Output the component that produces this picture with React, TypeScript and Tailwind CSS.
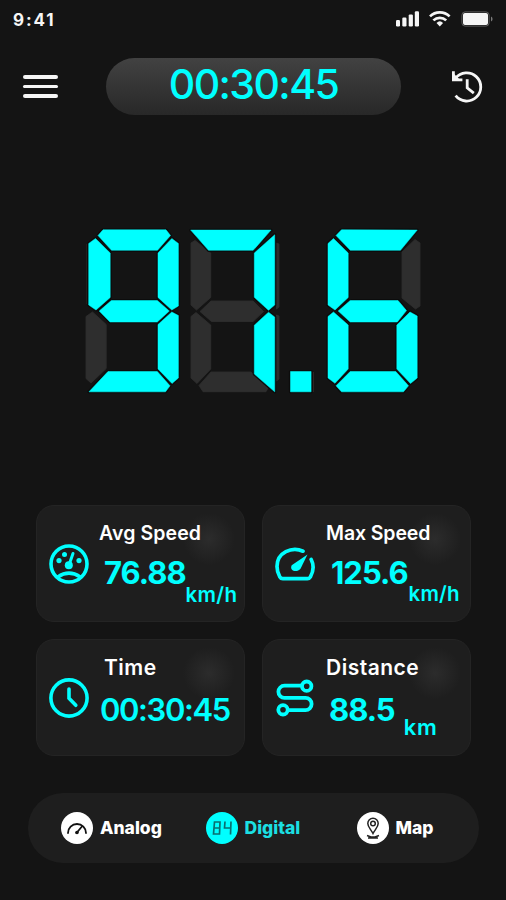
import type { ReactNode } from "react";
import clsx from "clsx";

// seven segment display, lit segments first and ghost segments below them
const litSegments = [
  // 9
  "98,235.5 103,229.8 166,229.8 170.5,235.5 157.5,250.3 111.5,250.3",
  "88.7,243.5 95.5,238.5 110.2,253 110.2,297.5 96,310 88.7,305",
  "171.8,238.5 178.4,243.5 178.4,306 171.8,310 158,297.5 158,253",
  "99.2,311 111.3,300.5 157.3,300.5 169.3,311 157.3,322 110,322",
  "171.8,312 178.4,315.5 178.4,378 172,383.5 158,369 158,324.5",
  "89,391.8 108,371.5 157.3,371.5 170,385.8 165.5,391.8",
  // 7
  "190.7,230.1 271,230.1 253.2,250.3 208.5,250.3",
  "274.7,234.8 274.7,305 268.5,310.3 254.3,297.3 254.3,253",
  "268.5,312.2 274.7,317 274.7,391.8 254.3,374 254.3,325.2",
  // dot
  "290.5,371.5 311.1,371.5 311.1,391.8 290.5,391.8",
  // 6
  "336,235.5 341.5,229.8 417.2,230.1 400.5,250.3 350.3,250.3",
  "328,243.5 333.5,238.5 348.2,253 348.2,297.5 335,310 328,305",
  "338.2,311 350.2,300.5 398,300.5 406.5,310.6 397.3,322 350.2,322",
  "333.5,312 348.2,325 348.2,369 335,383.3 328,378 328,316.5",
  "410,312 417.2,316 417.2,378 410.5,383.5 396.8,369 396.8,325",
  "336,385.8 350.2,371.5 395.800,371.5 408.5,385.8 403.5,391.8 341.5,391.8",
];

const ghostSegments = [
  "86,316.5 92.5,312 106.2,324.5 106.2,368.5 91,383 86,378.5",
  "191,243 195,240.5 210.7,253 210.7,297.5 196.5,310 191,305",
  "200,311.5 211,301 253,301 263.5,311.5 253,321.5 211.5,321.5",
  "191,316.5 196,312.5 210.7,325 210.7,369 197,383.5 191,378",
  "199,385.5 211,372 251,372 268,388 266,391.7 203,391.7",
  "276.5,243 279,244 279,307 276.5,309",
  "276.5,315 279,316 279,379 276.5,381",
  "420,243 420,306 415.5,309 402,298 402,252 415,239.5",
];

function SpeedDisplay() {
  return (
    <svg viewBox="80 220 350 180" className="h-[180px] w-[350px]" strokeLinejoin="round">
      <g fill="#2e2e2e" stroke="#2e2e2e" strokeWidth="0.8">
        {ghostSegments.map((points) => (
          <polygon key={points} points={points} />
        ))}
      </g>
      <path d="M313.3 372v20M87 244v60" stroke="#352a28" fill="none" />
      {/* dark rim keeps neighbouring segments apart */}
      <g fill="none" stroke="#0c0c0c" strokeWidth="3.2">
        {litSegments.map((points) => (
          <polygon key={points} points={points} />
        ))}
      </g>
      <g fill="#00ffff" stroke="#00ffff" strokeWidth="0.5">
        {litSegments.map((points) => (
          <polygon key={points} points={points} />
        ))}
      </g>
    </svg>
  );
}

function StatusBar() {
  return (
    <div className="flex h-10 items-start justify-between pt-[9px] pr-[12px] pl-[13px] text-[#f6f6f6]">
      <span className="mt-[3px] text-[17px] leading-none font-bold tracking-[1.9px]">9:41</span>
      <svg viewBox="0 0 100 20" className="h-5 w-[100px]">
        <g fill="currentColor">
          <rect x="2" y="11" width="4" height="6.5" rx="1.2" />
          <rect x="8.3" y="8.6" width="4.2" height="8.9" rx="1.2" />
          <rect x="14.7" y="5.4" width="4.2" height="12.1" rx="1.2" />
          <rect x="20.8" y="2.2" width="4.2" height="15.3" rx="1.2" />
          <path d="M45.8 17.4l-3.3-3.5a4.8 4.8 0 0 1 6.6 0z" />
          <rect x="69" y="4" width="25" height="12" rx="2" />
        </g>
        <g fill="none" stroke="currentColor" strokeWidth="2.7">
          <path d="M36 7.4a14 14 0 0 1 19.6 0" />
          <path d="M39.4 11.4a9.2 9.2 0 0 1 12.8 0" />
        </g>
        <rect x="67.9" y="2.9" width="27.2" height="14.2" rx="3.2" fill="none" stroke="#5c5c5c" />
        <path d="M97 7.6v4.8a2.6 2.6 0 0 0 0-4.8z" fill="#7a7a7a" />
      </svg>
    </div>
  );
}

function HistoryIcon() {
  return (
    <svg viewBox="0 0 34 36" className="h-9 w-[34px]" fill="none" stroke="#f6f6f6" strokeWidth="2.8">
      <path d="M4.6 9.2A14.100 14.100 0 1 1 4.600 26.700" />
      <path d="M2.400 2.200v8.600h9" />
      <path d="M2.600 4.500v6.300h6.300z" fill="#f6f6f6" stroke="none" />
      <path d="M16.200 10.300v8.600l6.600 5.200" />
    </svg>
  );
}

function AvgIcon() {
  return (
    <svg viewBox="0 0 40 40" className="size-10 text-[#00ffff]" fill="none" stroke="currentColor">
      <circle cx="20" cy="20" r="18" strokeWidth="3.6" />
      <path d="M8.8 33q11.200-7.600 22.400 0" strokeWidth="3.6" />
      <path d="M20 21l4-11.5" strokeWidth="3" strokeLinecap="round" />
      <g fill="currentColor" stroke="none">
        <circle cx="19.8" cy="21.2" r="4" />
        <circle cx="10" cy="16.6" r="2.6" />
        <circle cx="15.5" cy="10.4" r="2.5" />
        <circle cx="30" cy="16.6" r="2.6" />
      </g>
    </svg>
  );
}

function MaxIcon() {
  return (
    <svg viewBox="0 0 40 36" className="h-9 w-10 text-[#00ffff]" fill="none" stroke="currentColor" strokeWidth="3.7">
      <path d="M28 5.200C17 .2 2 6.400 2 20.500c0 4 1.200 7.500 2.800 10.300q.9 1.800 3 1.800h24.600q2 0 3-1.800c3-5.400 3.600-11.800.8-17.300" strokeLinecap="round" />
      <path d="M32.500 8.500L25.500 22.700c-3.600 4.600-11.500 2.200-8.800-3.400z" fill="currentColor" stroke="none" />
    </svg>
  );
}

function TimeIcon() {
  return (
    <svg viewBox="0 0 40 40" className="size-10 text-[#00ffff]" fill="none" stroke="currentColor" strokeWidth="3.6">
      <circle cx="20" cy="20" r="18.1" />
      <path d="M20 11v9.300l6.800 7" strokeLinecap="round" />
    </svg>
  );
}

function DistanceIcon() {
  return (
    <svg viewBox="0 0 38 38" className="size-[38px] text-[#00ffff]" fill="none" stroke="currentColor" strokeWidth="3.800">
      <circle cx="30.700" cy="7.200" r="4.700" />
      <circle cx="7" cy="30.800" r="4.700" />
      <path d="M26 6.700H8.500a6.100 6.100 0 0 0 0 12.200h21a6.100 6.100 0 0 1 0 12.200H12" />
    </svg>
  );
}

function StatCard({ icon, iconClass, children }: { icon: ReactNode; iconClass: string; children: ReactNode }) {
  return (
    <div className="relative flex h-[117px] w-[209px] items-start rounded-[18px] border border-[#242424] bg-[#1e1e1e]">
      <div className="absolute top-[6px] right-[8px] size-[54px] bg-[radial-gradient(circle,#2c2c2c_0%,rgba(30,30,30,0)_68%)]" />
      <div className={clsx("relative shrink-0", iconClass)}>{icon}</div>
      <div className="relative flex-1 whitespace-nowrap">{children}</div>
    </div>
  );
}

function NavItem({ label, active, className, children }: { label: string; active?: boolean; className: string; children: ReactNode }) {
  return (
    <button className={clsx("flex items-center gap-[7px]", className, active ? "text-[#1bdfe2]" : "text-white")}>
      <span className={clsx("flex size-8 items-center justify-center rounded-full", active ? "bg-[#00ffff]" : "bg-white")}>
        {children}
      </span>
      <span className="text-[17.5px] leading-none font-extrabold">{label}</span>
    </button>
  );
}

export default function App() {
  return (
    <div className="flex h-[900px] w-[506px] flex-col overflow-hidden bg-[#141414] font-['Inter',sans-serif]">
      <StatusBar />

      <header className="mt-[18px] flex h-[57px] items-center pl-[23px]">
        <button className="flex w-[35px] flex-col gap-[5.500px]">
          <span className="h-[3.700px] rounded-full bg-[#f6f6f6]" />
          <span className="h-[3.700px] rounded-full bg-[#f6f6f6]" />
          <span className="h-[3.700px] rounded-full bg-[#f6f6f6]" />
        </button>
        <div className="ml-12 flex h-[57px] w-[295px] items-center justify-center rounded-full bg-linear-to-b from-[#424242] to-[#282828]">
          <span className="-mt-[5px] text-[41px] leading-none font-medium tracking-[-1.6px] text-[#00ffff]">00:30:45</span>
        </div>
        <button className="ml-[50px]">
          <HistoryIcon />
        </button>
      </header>

      <div className="mt-[105px] ml-20">
        <SpeedDisplay />
      </div>

      <div className="mt-[105px] ml-9 grid w-[435px] grid-cols-2 gap-x-[17px] gap-y-[17px]">
        <StatCard icon={<AvgIcon />} iconClass="mt-[38px] ml-[12px]">
          <p className="mt-[17px] ml-[10px] text-[19.500px] leading-[20px] font-semibold tracking-[0.1px] text-white">Avg Speed</p>
          <div className="mt-[14px] ml-[15px] flex text-[#00ffff]">
            <span className="text-[31px] leading-none font-bold tracking-[-1px]">76.88</span>
            <span className="mt-[27px] text-[20.500px] leading-[21px] font-semibold tracking-[0.300px]">km/h</span>
          </div>
        </StatCard>
        <StatCard icon={<MaxIcon />} iconClass="mt-[40px] ml-[12px]">
          <p className="mt-[17px] ml-[11px] text-[19.500px] leading-[20px] font-semibold tracking-[-0.1px] text-white">Max Speed</p>
          <div className="mt-[14px] ml-[16px] flex text-[#00ffff]">
            <span className="text-[31px] leading-none font-bold tracking-[-1px]">125.6</span>
            <span className="mt-[26px] ml-[1px] text-[20.500px] leading-[21px] font-semibold tracking-[0.200px]">km/h</span>
          </div>
        </StatCard>
        <StatCard icon={<TimeIcon />} iconClass="mt-[38px] ml-[12px]">
          <p className="mt-[17px] ml-[15px] text-[21px] leading-[21px] font-semibold tracking-[0.500px] text-white">Time</p>
          <div className="mt-[16px] ml-[11px] flex text-[#00ffff]">
            <span className="text-[31px] leading-none font-semibold tracking-[-1.400px]">00:30:45</span>
          </div>
        </StatCard>
        <StatCard icon={<DistanceIcon />} iconClass="mt-[39px] ml-[13px]">
          <p className="mt-[17px] ml-[12px] text-[21px] leading-[21px] font-semibold tracking-[0.500px] text-white">Distance</p>
          <div className="mt-[16px] ml-[15px] flex text-[#00ffff]">
            <span className="text-[31px] leading-none font-bold tracking-[-1px]">88.5</span>
            <span className="mt-[22px] ml-[9px] text-[22px] leading-[22px] font-semibold tracking-[0.800px]">km</span>
          </div>
        </StatCard>
      </div>

      <nav className="mt-[37px] ml-7 flex h-[70px] w-[451px] items-center rounded-full bg-[#1e1e1e] pl-[33px]">
        <NavItem label="Analog" className="w-[144.500px]">
          <svg viewBox="0 0 24 24" className="size-6" fill="none" stroke="#111" strokeWidth="1.800" strokeLinecap="round">
            <path d="M3 17a9 9 0 1 1 18 0M11.500 17l5-6" />
            <circle cx="12" cy="16.500" r="1.800" fill="#111" stroke="none" />
          </svg>
        </NavItem>
        <NavItem label="Digital" active className="w-[151px]">
          <svg viewBox="0 0 22 16" className="h-4 w-[22px]" fill="none" stroke="#0a6f70" strokeWidth="1.700">
            <path d="M3.500 2h5.500l-.5 12H2.500zM3 8h6M14 1.500L13.500 8h6M20 1.500L19.500 14.500" />
          </svg>
        </NavItem>
        <NavItem label="Map" className="">
          <svg viewBox="0 0 16 22" className="h-[22px] w-4" fill="none" stroke="#222" strokeWidth="1.500">
            <path d="M8 16.500C6 12.500 2.800 10 2.800 6.500a5.200 5.200 0 0 1 10.400 0c0 3.500-3.200 6-5.200 10z" />
            <circle cx="8" cy="6.500" r="2.300" />
            <path d="M2 18.500l4 1.500h4l4-1.500M3 21h10" />
          </svg>
        </NavItem>
      </nav>
    </div>
  );
}
